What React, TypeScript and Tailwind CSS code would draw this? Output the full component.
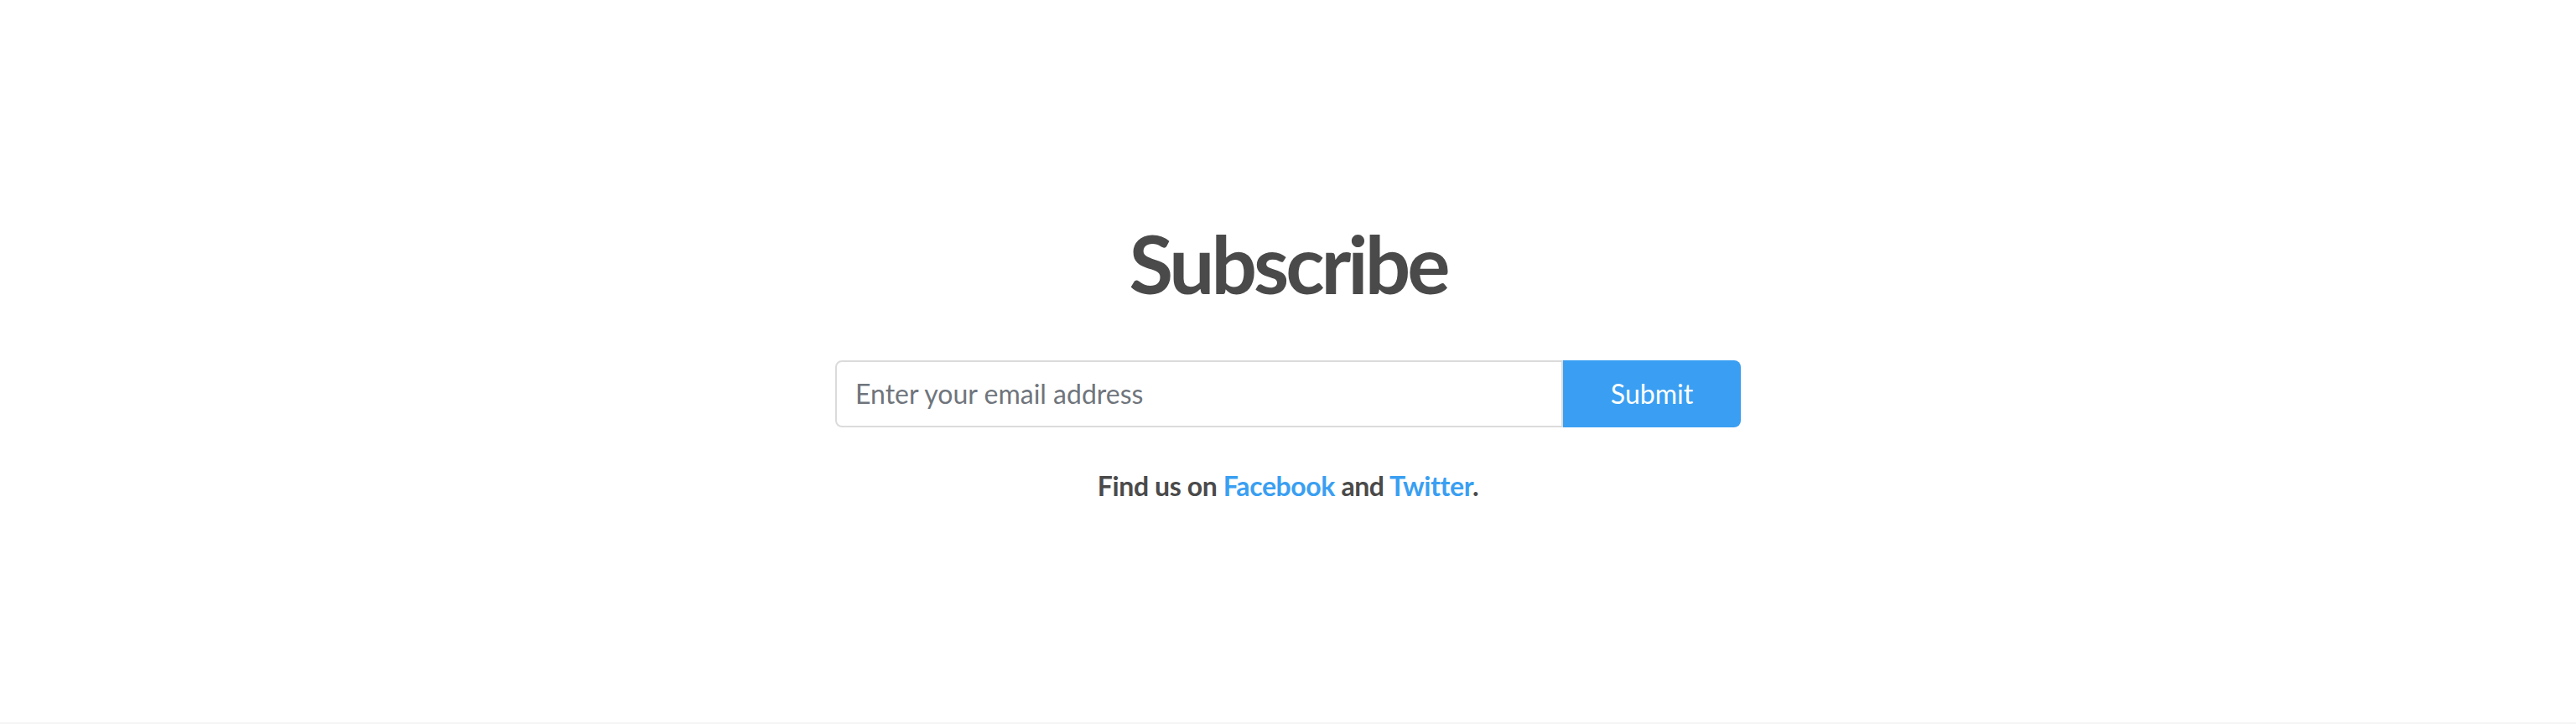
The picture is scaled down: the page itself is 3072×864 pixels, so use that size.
import React from "react";

const App = () => {
    return (
        <div className="min-h-screen bg-white font-['Lato','Noto_Sans',sans-serif] text-[#4a4a4a]">
            <section className="flex h-[862px] flex-col items-center justify-center pt-[7px]">
                <h1 className="text-[96px] font-bold leading-none tracking-[-4px] text-[#4a4a4a]">
                    Subscribe
                </h1>
                <form
                    className="mt-[68px] flex w-[1080px]"
                    onSubmit={(e) => e.preventDefault()}
                >
                    <input
                        type="email"
                        placeholder="Enter your email address"
                        className="h-[80px] flex-1 rounded-l-[8px] border-2 border-[#dbdbdb] bg-white px-[22px] text-[32px] text-[#363636] placeholder-[#6f757c] outline-none"
                    />
                    <button
                        type="submit"
                        className="h-[80px] w-[212px] rounded-r-[8px] bg-[#3a9ff2] text-[32px] text-white"
                    >
                        Submit
                    </button>
                </form>
                <p className="mt-[46px] text-[32px] font-bold leading-[48px] tracking-[-0.4px]">
                    Find us on <a href="#" className="text-[#3a9ff2]">Facebook</a> and{" "}
                    <a href="#" className="text-[#3a9ff2]">Twitter</a>.
                </p>
            </section>
            <div className="h-[2px] bg-[#f5f5f5]" />
        </div>
    );
};

export default App;
